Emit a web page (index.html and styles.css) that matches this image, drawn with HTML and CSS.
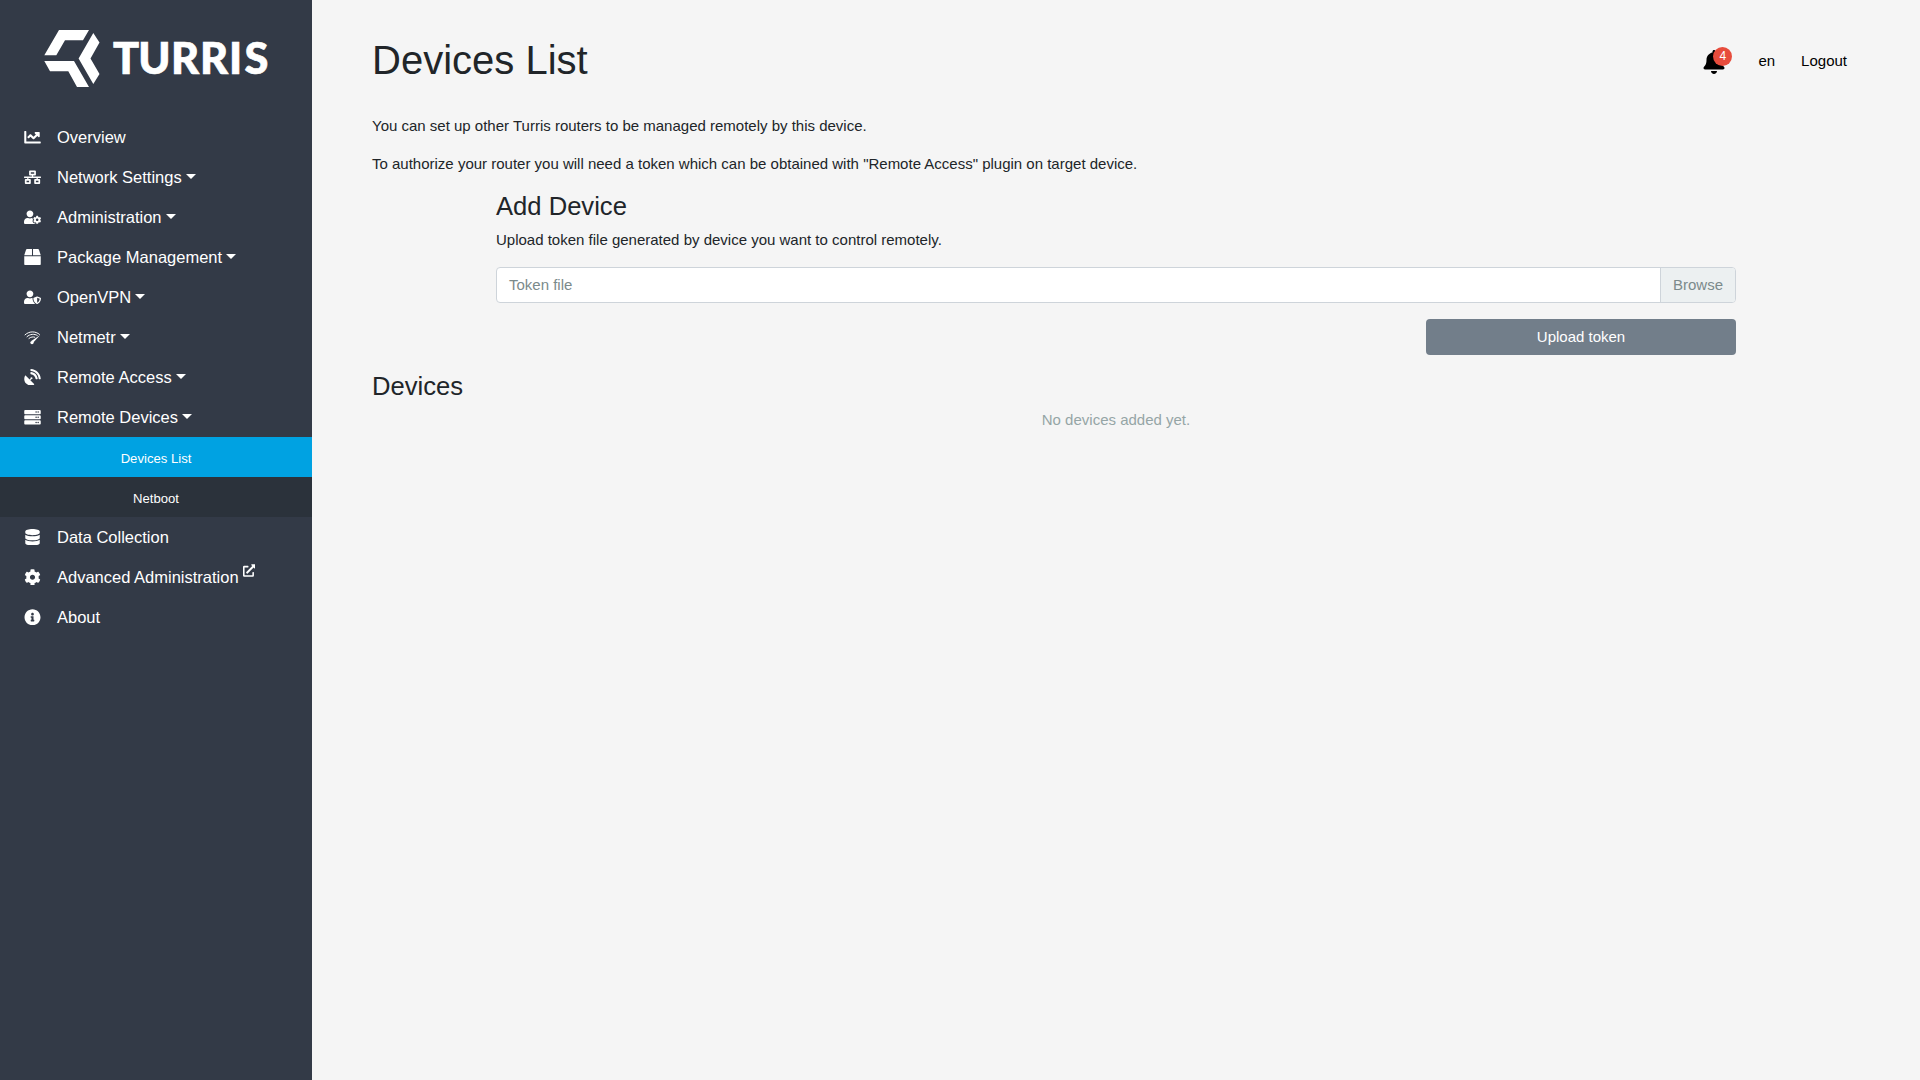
FILE: index.html
```html
<!DOCTYPE html>
<html lang="en">
<head>
<meta charset="utf-8">
<title>Devices List | Turris</title>
<link rel="stylesheet" href="styles.css">
</head>
<body>
<aside class="sidebar">
  <a class="logo">
    <svg width="312" height="117" viewBox="0 0 312 117" fill="#fff">
      <path d="M59 30H89L83 40.3H65L56.300 55.300H44.300zM44.300 61H74L89 87H77L68.300 71.300H50zM93.300 33L99.500 42.500L90.500 58.500L99.500 74L93.300 84L78.600 58.500z"/>
      <text class="wordmark" x="113 138.300 171 200 229 244.500" y="74">TURRIS</text>
    </svg>
  </a>
  <nav>
    <a class="item"><svg class="icon" viewBox="0 0 512 512"><path d="M496 384H64V80c0-8.840-7.160-16-16-16H16C7.160 64 0 71.160 0 80v336c0 17.670 14.330 32 32 32h464c8.840 0 16-7.160 16-16v-32c0-8.840-7.160-16-16-16zM464 96H345.940c-21.380 0-32.090 25.850-16.970 40.970l32.400 32.400L288 242.750l-73.370-73.370c-12.500-12.500-32.760-12.500-45.250 0l-68.690 68.690c-6.250 6.250-6.250 16.380 0 22.630l22.620 22.620c6.250 6.250 16.380 6.250 22.630 0L192 237.250l73.370 73.370c12.500 12.500 32.760 12.500 45.250 0l96-96 32.400 32.400c15.120 15.120 40.970 4.410 40.970-16.970V112c.010-8.840-7.150-16-15.990-16z"/></svg><span>Overview</span></a>
    <a class="item"><svg class="icon" viewBox="0 0 640 512"><path fill-rule="evenodd" d="M640 264v-16c0-8.840-7.160-16-16-16H344v-40h72c17.670 0 32-14.330 32-32V32c0-17.670-14.330-32-32-32H224c-17.670 0-32 14.330-32 32v128c0 17.670 14.330 32 32 32h72v40H16c-8.840 0-16 7.160-16 16v16c0 8.840 7.160 16 16 16h104v40H64c-17.670 0-32 14.330-32 32v128c0 17.670 14.330 32 32 32h160c17.670 0 32-14.330 32-32V352c0-17.670-14.330-32-32-32h-56v-40h304v40h-56c-17.670 0-32 14.330-32 32v128c0 17.670 14.330 32 32 32h160c17.670 0 32-14.330 32-32V352c0-17.670-14.330-32-32-32h-56v-40h104c8.840 0 16-7.160 16-16zM256 128V64h128v64H256zM192 448H96v-64h96v64zM544 448h-96v-64h96v64z"/></svg><span class="drop">Network Settings</span></a>
    <a class="item"><svg class="icon" viewBox="0 0 640 512"><path fill-rule="evenodd" d="M610.500 373.300c2.600-14.100 2.600-28.500 0-42.600l25.800-14.900c3-1.700 4.300-5.200 3.300-8.500-6.700-21.600-18.200-41.200-33.200-57.400-2.300-2.500-6-3.100-9-1.400l-25.800 14.900c-10.900-9.300-23.400-16.500-36.900-21.300v-29.800c0-3.400-2.400-6.400-5.700-7.100-22.300-5-45-4.800-66.200 0-3.300.7-5.700 3.700-5.700 7.100v29.800c-13.500 4.800-26 12-36.900 21.300l-25.800-14.900c-2.900-1.700-6.700-1.100-9 1.400-15 16.200-26.500 35.800-33.200 57.400-1 3.300.4 6.800 3.300 8.500l25.800 14.900c-2.600 14.100-2.600 28.500 0 42.600l-25.800 14.900c-3 1.700-4.300 5.200-3.300 8.500 6.700 21.600 18.200 41.100 33.200 57.400 2.300 2.500 6 3.100 9 1.400l25.800-14.900c10.900 9.300 23.400 16.500 36.900 21.300v29.800c0 3.400 2.400 6.400 5.700 7.100 22.300 5 45 4.800 66.200 0 3.300-.7 5.700-3.700 5.700-7.100v-29.800c13.500-4.800 26-12 36.900-21.300l25.800 14.900c2.900 1.700 6.700 1.100 9-1.400 15-16.200 26.500-35.800 33.200-57.400 1-3.300-.4-6.800-3.300-8.500zM496 400.500c-26.800 0-48.500-21.800-48.500-48.500s21.800-48.500 48.500-48.500 48.500 21.800 48.500 48.500-21.700 48.500-48.500 48.500zM224 256c70.700 0 128-57.300 128-128S294.700 0 224 0 96 57.300 96 128s57.300 128 128 128zm201.200 226.500c-2.300-1.200-4.600-2.600-6.800-3.900l-7.900 4.600c-6 3.400-12.800 5.300-19.600 5.300-10.900 0-21.400-4.600-28.900-12.600-18.300-19.800-32.300-43.900-40.200-69.600-5.500-17.700 1.900-36.400 17.900-45.700l7.900-4.600c-.1-2.600-.1-5.200 0-7.800l-7.900-4.600c-16-9.200-23.400-28-17.900-45.700.9-2.900 2.200-5.800 3.200-8.700-3.800-.3-7.500-1.200-11.400-1.200h-16.700c-22.200 10.200-46.900 16-72.900 16s-50.600-5.800-72.900-16h-16.700C60.200 288 0 348.200 0 422.400V464c0 26.500 21.500 48 48 48h352c10.100 0 19.500-3.200 27.200-8.500-1.200-3.800-2-7.700-2-11.800z"/></svg><span class="drop">Administration</span></a>
    <a class="item"><svg class="icon" viewBox="0 0 512 512"><path d="M509.500 184.600L458.900 32.800C452.400 13.200 434.100 0 413.400 0H272v192h238.700c-.4-2.500-.4-5-1.200-7.400zM240 0H98.600c-20.700 0-39 13.200-45.500 32.800L2.500 184.600c-.8 2.400-.8 4.900-1.200 7.400H240V0zM0 224v240c0 26.500 21.500 48 48 48h416c26.500 0 48-21.500 48-48V224H0z"/></svg><span class="drop">Package Management</span></a>
    <a class="item"><svg class="icon" viewBox="0 0 640 512"><path fill-rule="evenodd" d="M622.300 271.100l-115.200-45c-4.100-1.600-12.600-3.700-22.200 0l-115.200 45c-10.700 4.200-17.700 14-17.700 24.900 0 111.600 68.700 188.800 132.900 213.900 9.600 3.700 18 1.600 22.200 0C558.400 489.900 640 420.500 640 296c0-10.900-7-20.700-17.700-24.900zM496 462.400V273.300l95.500 37.300c-5.600 87.100-60.900 135.400-95.500 151.800zM224 256c70.700 0 128-57.300 128-128S294.700 0 224 0 96 57.300 96 128s57.300 128 128 128zm96 40c0-2.500.8-4.800 1.100-7.200-2.500-.1-4.900-.8-7.500-.8h-16.700c-22.200 10.200-46.900 16-72.900 16s-50.600-5.800-72.900-16h-16.700C60.200 288 0 348.200 0 422.400V464c0 26.500 21.500 48 48 48h352c6.800 0 13.300-1.500 19.200-4-54-42.900-99.200-116.700-99.200-212z"/></svg><span class="drop">OpenVPN</span></a>
    <a class="item"><svg class="icon" viewBox="0 0 17 17"><g fill="none" stroke="#fff" stroke-width="1"><path d="M.5 6.300C5 2 11.500 2 16 5.800"/><path d="M2.500 8.200C6 5 10.500 4.800 13.700 6.800"/><path d="M4.500 10C6.800 8.100 9.200 7.800 11.200 8.600"/></g><path d="M16.500 6.300L9.300 13.800 7.200 12.300z"/><circle cx="8" cy="14" r="1.700"/></svg><span class="drop">Netmetr</span></a>
    <a class="item"><svg class="icon" viewBox="0 0 512 512"><path d="M305.450 462.590c7.390 7.300 6.190 20.100-3 25-77.710 41.800-176.730 29.910-242.340-35.710C-5.500 386.280-17.400 287.360 24.410 209.550c4.890-9.090 17.690-10.290 25-3L166.230 323.370l27.390-27.400c-.69-2.610-1.590-5-1.590-7.810a32 32 0 1 1 32 32c-2.800 0-5.200-.89-7.800-1.590l-27.410 27.410zM511.980 303.070a16.100 16.100 0 0 1-16 17h-32.120a15.970 15.970 0 0 1-15.890-15C440.470 175.550 336.450 70.530 207.030 63.530a15.840 15.840 0 0 1-15-15.910v-31.600A16.090 16.090 0 0 1 209.030.02C372.250 8.620 503.470 139.840 511.980 303.070zm-96.020-.3a16.210 16.210 0 0 1-16.110 17.300h-32.200a16.070 16.070 0 0 1-15.900-14.700c-6.900-77.020-68.110-138.920-144.920-145.230a15.940 15.940 0 0 1-14.800-15.890v-32.120a16.130 16.130 0 0 1 17.300-16.090C319.450 104.540 407.560 192.640 415.960 302.770z"/></svg><span class="drop">Remote Access</span></a>
    <a class="item"><svg class="icon" viewBox="0 0 512 512"><path fill-rule="evenodd" d="M480 160H32c-17.673 0-32-14.327-32-32V64c0-17.673 14.327-32 32-32h448c17.673 0 32 14.327 32 32v64c0 17.673-14.327 32-32 32zm-48-88a24 24 0 100 48 24 24 0 000-48zm-64 0a24 24 0 100 48 24 24 0 000-48zm112 248H32c-17.673 0-32-14.327-32-32v-64c0-17.673 14.327-32 32-32h448c17.673 0 32 14.327 32 32v64c0 17.673-14.327 32-32 32zm-48-88a24 24 0 100 48 24 24 0 000-48zm-64 0a24 24 0 100 48 24 24 0 000-48zm112 248H32c-17.673 0-32-14.327-32-32v-64c0-17.673 14.327-32 32-32h448c17.673 0 32 14.327 32 32v64c0 17.673-14.327 32-32 32zm-48-88a24 24 0 100 48 24 24 0 000-48zm-64 0a24 24 0 100 48 24 24 0 000-48z"/></svg><span class="drop">Remote Devices</span></a>
    <div class="submenu">
      <a class="subitem active">Devices List</a>
      <a class="subitem">Netboot</a>
    </div>
    <a class="item"><svg class="icon" viewBox="0 0 448 512"><path d="M448 73.143v45.714C448 159.143 347.667 192 224 192S0 159.143 0 118.857V73.143C0 32.857 100.333 0 224 0s224 32.857 224 73.143zM448 176v102.857C448 319.143 347.667 352 224 352S0 319.143 0 278.857V176c48.125 33.143 136.208 48.572 224 48.572S399.874 209.143 448 176zm0 160v102.857C448 479.143 347.667 512 224 512S0 479.143 0 438.857V336c48.125 33.143 136.208 48.572 224 48.572S399.874 369.143 448 336z"/></svg><span>Data Collection</span></a>
    <a class="item"><svg class="icon" viewBox="0 0 512 512"><path d="M487.400 315.700l-42.600-24.600c4.300-23.200 4.300-47 0-70.200l42.600-24.600c4.900-2.800 7.100-8.600 5.500-14-11.100-35.600-30-67.800-54.700-94.600-3.800-4.100-10-5.100-14.800-2.300L380.800 110c-17.900-15.400-38.500-27.300-60.800-35.100V25.800c0-5.600-3.900-10.500-9.400-11.700-36.700-8.200-74.300-7.800-109.200 0-5.500 1.200-9.400 6.100-9.400 11.700V75c-22.200 7.900-42.800 19.800-60.800 35.100L88.700 85.500c-4.900-2.800-11-1.900-14.800 2.300-24.700 26.700-43.600 58.900-54.700 94.600-1.700 5.400.6 11.200 5.500 14L67.300 221c-4.300 23.200-4.300 47 0 70.200l-42.600 24.600c-4.900 2.800-7.100 8.600-5.500 14 11.100 35.600 30 67.800 54.700 94.600 3.800 4.100 10 5.100 14.800 2.300l42.600-24.600c17.900 15.400 38.500 27.300 60.800 35.100v49.200c0 5.600 3.900 10.500 9.400 11.700 36.700 8.200 74.300 7.800 109.200 0 5.500-1.200 9.400-6.100 9.400-11.700v-49.200c22.200-7.900 42.800-19.800 60.800-35.100l42.600 24.600c4.900 2.800 11 1.900 14.800-2.300 24.700-26.700 43.600-58.900 54.700-94.600 1.500-5.500-.7-11.300-5.600-14.100zM256 336c-44.100 0-80-35.900-80-80s35.900-80 80-80 80 35.900 80 80-35.900 80-80 80z"/></svg><span>Advanced Administration</span><svg class="external" viewBox="0 0 512 512"><path d="M432 320h-32a16 16 0 00-16 16v112H64V128h144a16 16 0 0016-16V80a16 16 0 00-16-16H48a48 48 0 00-48 48v352a48 48 0 0048 48h352a48 48 0 0048-48V336a16 16 0 00-16-16zM488 0H360c-21.370 0-32.050 25.910-17 41l35.730 35.730L135 320.370a24 24 0 000 34L157.670 377a24 24 0 0034 0l243.610-243.680L471 169c15 15 41 4.500 41-17V24a24 24 0 00-24-24z"/></svg></a>
    <a class="item"><svg class="icon" viewBox="0 0 512 512"><path d="M256 8C119.043 8 8 119.083 8 256c0 136.997 111.043 248 248 248s248-111.003 248-248C504 119.083 392.957 8 256 8zm0 110c23.196 0 42 18.804 42 42s-18.804 42-42 42-42-18.804-42-42 18.804-42 42-42zm56 254c0 6.627-5.373 12-12 12h-88c-6.627 0-12-5.373-12-12v-24c0-6.627 5.373-12 12-12h12v-64h-12c-6.627 0-12-5.373-12-12v-24c0-6.627 5.373-12 12-12h64c6.627 0 12 5.373 12 12v100h12c6.627 0 12 5.373 12 12v24z"/></svg><span>About</span></a>
  </nav>
</aside>
<main class="content">
  <header class="topbar">
    <h1>Devices List</h1>
    <div class="tools">
      <a class="bell"><svg viewBox="0 0 448 512"><path d="M224 512c35.320 0 63.970-28.650 63.970-64H160.030c0 35.350 28.650 64 63.970 64zm215.390-149.710c-19.320-20.760-55.470-51.990-55.470-154.290 0-77.700-54.480-139.900-127.940-155.160V32c0-17.670-14.320-32-31.980-32s-31.980 14.330-31.980 32v20.840C118.560 68.100 64.080 130.300 64.080 208c0 102.300-36.150 133.530-55.470 154.290-6 6.450-8.660 14.160-8.610 21.710.11 16.400 12.980 32 32.100 32h383.800c19.120 0 32-15.600 32.100-32 .05-7.550-2.610-15.270-8.610-21.710z"/></svg><span class="badge">4</span></a>
      <a>en</a>
      <a class="logout">Logout</a>
    </div>
  </header>
  <p>You can set up other Turris routers to be managed remotely by this device.</p>
  <p>To authorize your router you will need a token which can be obtained with "Remote Access" plugin on target device.</p>
  <section class="form">
    <h2>Add Device</h2>
    <p>Upload token file generated by device you want to control remotely.</p>
    <div class="file"><span class="filename">Token file</span><span class="browse">Browse</span></div>
    <button class="upload">Upload token</button>
  </section>
  <h2>Devices</h2>
  <p class="empty">No devices added yet.</p>
</main>
</body>
</html>
```
FILE: styles.css
```css
* { box-sizing: border-box; }
body {
  margin: 0;
  display: flex;
  min-height: 100vh;
  background: #f5f5f5;
  color: #212529;
  font: 15px/22.5px "Liberation Sans", Arial, sans-serif;
}
.sidebar { width: 312px; flex: none; background: #333a47; color: #fff; }
.logo { display: block; height: 117px; }
.logo svg { display: block; }
.wordmark { font: 900 43.3px Lato, sans-serif; stroke: #fff; stroke-width: .7px; }
.item { display: flex; align-items: center; height: 40px; padding-left: 24px; font-size: 16.5px; }
.icon { width: 17px; height: 16.5px; margin-right: 16px; fill: #fff; flex: none; }
.drop::after {
  content: "";
  display: inline-block;
  margin-left: 4.2px;
  vertical-align: 4.2px;
  border: 5px solid transparent;
  border-top-color: #fff;
  border-bottom: 0;
}
.external { width: 12.5px; height: 13px; margin: 0 0 13px 4px; fill: #fff; }
.submenu { background: #2b323b; }
.subitem { display: flex; align-items: center; justify-content: center; height: 40px; padding-top: 4px; font-size: 13.125px; }
.active { background: #00a2e2; }
.content { flex: 1; padding: 36px 60px 0; }
.topbar { display: flex; justify-content: space-between; height: 79px; }
h1, h2 { margin: 0; font-weight: 400; line-height: 1.2; }
h1 { font-size: 40px; }
h2 { font-size: 25.6px; line-height: 30.36px; margin-bottom: 8px; }
p { margin: 0 0 15px; }
.tools { display: flex; height: 50px; align-items: center; color: #000; padding-right: 13px; }
.bell { position: relative; width: 22px; height: 24px; margin: 1px 33px 0 0; }
.bell svg { display: block; width: 22px; height: 24px; }
.badge {
  position: absolute;
  left: 10px;
  top: -3px;
  width: 19px;
  height: 19px;
  border-radius: 50%;
  background: #e74c3c;
  color: #fff;
  font-size: 12px;
  line-height: 19px;
  text-align: center;
}
.logout { margin-left: 26px; }
.form { display: flex; flex-direction: column; width: 1240px; margin: 0 auto 16px; padding-top: 1px; }
.file {
  display: flex;
  height: 36px;
  margin-bottom: 16px;
  border: 1px solid #ced4da;
  border-radius: 4px;
  background: #fff;
  color: #7b8a8b;
  line-height: 34px;
  overflow: hidden;
}
.filename { flex: 1; padding-left: 12px; }
.browse { padding: 0 12px; border-left: 1px solid #ced4da; background: #ecf0f1; }
.upload {
  align-self: flex-end;
  width: 310px;
  height: 36px;
  padding: 1px 0 0;
  border: 0;
  border-radius: 4px;
  background: #727e8a;
  color: #fff;
  font: inherit;
}
.empty { text-align: center; color: #95a5a6; }
```
